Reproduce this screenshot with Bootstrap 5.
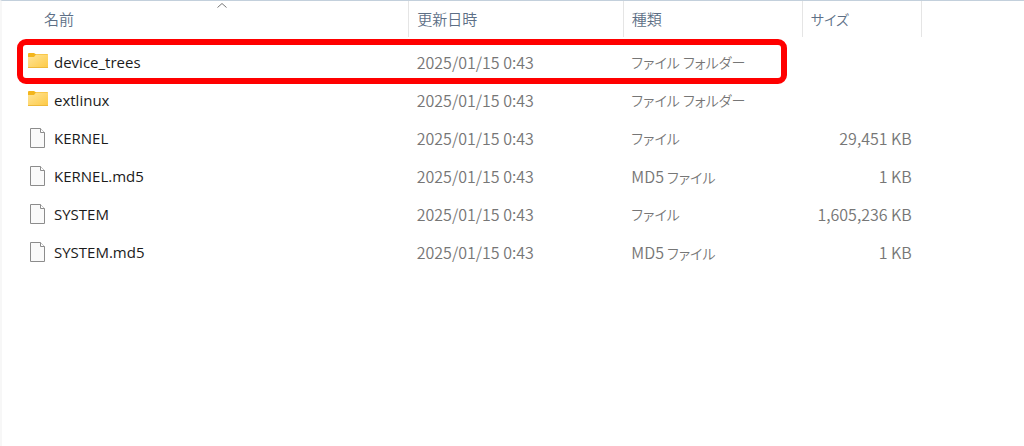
<!DOCTYPE html>
<html lang="ja">
<head>
<meta charset="utf-8">
<meta name="viewport" content="width=device-width, initial-scale=1">
<title>ファイル一覧</title>
<link href="https://cdn.jsdelivr.net/npm/bootstrap@5.3.0/dist/css/bootstrap.min.css" rel="stylesheet">
<style>
body{font-family:"Noto Sans CJK JP",sans-serif;font-size:16px;line-height:20px;color:#1b1b1b}
.explorer{border-top:1px solid #c3d0dc;border-left:2px solid #f7f7f7}
.files{table-layout:fixed}
.files th,.files td{white-space:nowrap;padding:0 8px;vertical-align:middle;font-feature-settings:"palt"}
.files th{height:36px;font-weight:350;font-size:15px;color:#5d6f86;border-right:1px solid #e5e5e5}
.files th:first-child{padding-left:42px}
.files tbody::before{content:"";display:block;height:6px}
.files tbody td{height:38px;color:#767676;font-weight:350}
.files td.text-end{padding-right:10px}
.files td.kind,.files th.kana{font-size:14px}
.files td.fname{padding-left:26px;color:#1b1b1b;font-weight:400;font-size:15px;font-family:"Open Sans",sans-serif}
.fitem{gap:6px}
.c-name{width:39.8%}.c-date{width:21%}.c-kind{width:17.5%}.c-size{width:11.7%}
.caret{left:34px;right:0;top:1px}
.marked::after{content:"";position:absolute;left:15px;top:-4px;width:75.3%;height:45px;border:6px solid #f00;border-radius:9px}
</style>
</head>
<body>
<svg width="0" height="0" class="position-absolute" aria-hidden="true">
<defs>
<linearGradient id="fold" x1="0" y1="0" x2="1" y2="1"><stop offset="0" stop-color="#ffe59a"/><stop offset="1" stop-color="#fdc943"/></linearGradient>
<symbol id="folder" viewBox="0 0 20 20"><path d="M0 2Q0 1 1 1H6L7.500 2H19Q20 2 20 3V8H0Z" fill="#f3b51c"/><path d="M0 5H6L8 2.500H19.500Q20 2.500 20 3V15.500Q20 16 19.500 16H.500Q0 16 0 15.500Z" fill="url(#fold)"/><path d="M0 15.500H20" stroke="#edb93b"/></symbol>
<symbol id="file" viewBox="0 0 20 20"><path d="M2.500.500H12.500L16.500 4.500V19.500H2.500Z" fill="#fafafa" stroke="#8c8c8c"/><path d="M12.500.500V4.500H16.500" fill="#fff" stroke="#8c8c8c"/></symbol>
</defs>
</svg>
<main class="explorer min-vh-100">
<table class="files w-100">
<colgroup><col class="c-name"><col class="c-date"><col class="c-kind"><col class="c-size"><col></colgroup>
<thead>
<tr><th scope="col" class="position-relative">名前<span class="caret position-absolute d-flex justify-content-center"><svg width="12" height="7" viewBox="0 0 12 7" fill="none" stroke="#777"><path d="M1.500 5.500L6 1.500L10.500 5.500"/></svg></span></th><th scope="col">更新日時</th><th scope="col">種類</th><th scope="col" class="kana">サイズ</th><td></td></tr>
</thead>
<tbody>
<tr class="marked position-relative"><td class="fname"><div class="fitem d-flex align-items-center"><svg width="20" height="20"><use href="#folder"/></svg>device_trees</div></td><td>2025/01/15 0:43</td><td class="kind">ファイル フォルダー</td><td></td><td></td></tr>
<tr><td class="fname"><div class="fitem d-flex align-items-center"><svg width="20" height="20"><use href="#folder"/></svg>extlinux</div></td><td>2025/01/15 0:43</td><td class="kind">ファイル フォルダー</td><td></td><td></td></tr>
<tr><td class="fname"><div class="fitem d-flex align-items-center"><svg width="20" height="20"><use href="#file"/></svg>KERNEL</div></td><td>2025/01/15 0:43</td><td class="kind">ファイル</td><td class="text-end">29,451 KB</td><td></td></tr>
<tr><td class="fname"><div class="fitem d-flex align-items-center"><svg width="20" height="20"><use href="#file"/></svg>KERNEL.md5</div></td><td>2025/01/15 0:43</td><td class="kind"><span class="fs-6">MD5</span> ファイル</td><td class="text-end">1 KB</td><td></td></tr>
<tr><td class="fname"><div class="fitem d-flex align-items-center"><svg width="20" height="20"><use href="#file"/></svg>SYSTEM</div></td><td>2025/01/15 0:43</td><td class="kind">ファイル</td><td class="text-end">1,605,236 KB</td><td></td></tr>
<tr><td class="fname"><div class="fitem d-flex align-items-center"><svg width="20" height="20"><use href="#file"/></svg>SYSTEM.md5</div></td><td>2025/01/15 0:43</td><td class="kind"><span class="fs-6">MD5</span> ファイル</td><td class="text-end">1 KB</td><td></td></tr>
</tbody>
</table>
</main>
<script src="https://cdn.jsdelivr.net/npm/bootstrap@5.3.0/dist/js/bootstrap.bundle.min.js"></script>
</body>
</html>
